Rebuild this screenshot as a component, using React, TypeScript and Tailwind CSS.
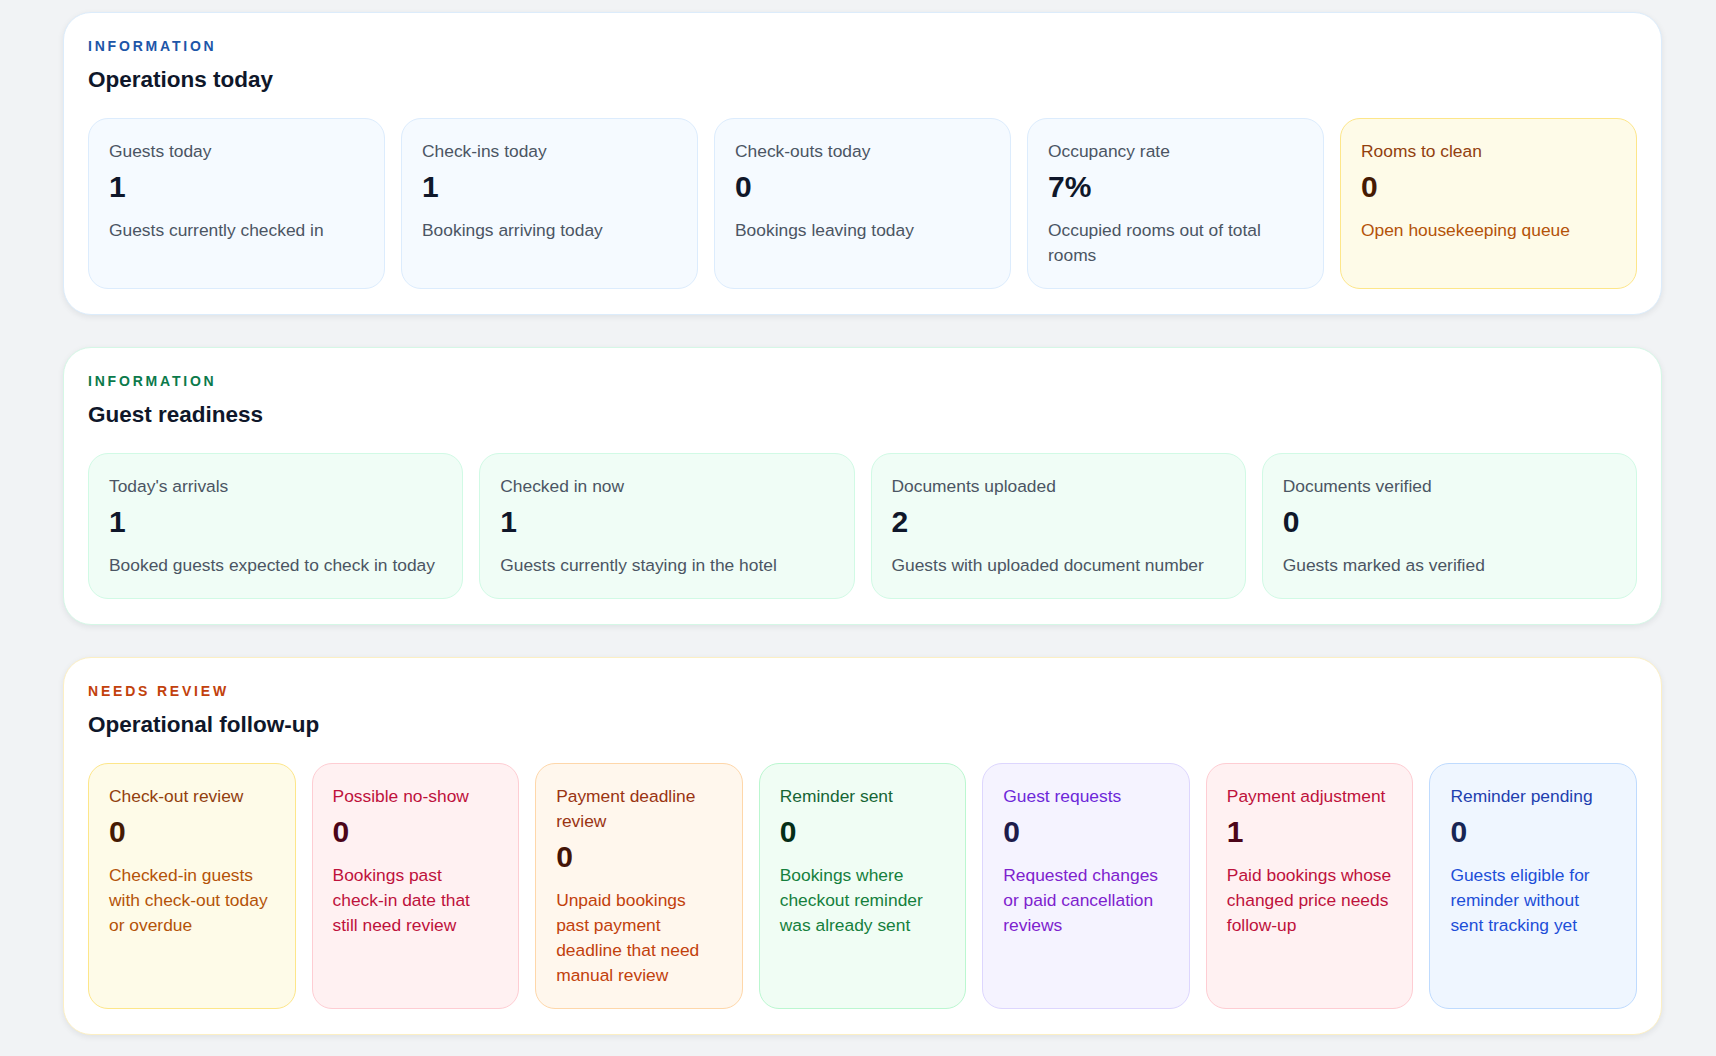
import { Fragment } from "react";

type Tone =
	| "sky"
	| "mint"
	| "amber"
	| "rose"
	| "orange"
	| "green"
	| "violet"
	| "red"
	| "blue";

type Metric = {
	label: string;
	value: string;
	hint: string;
	tone: Tone;
};

type Section = {
	eyebrow: string;
	eyebrowClass: string;
	title: string;
	borderClass: string;
	gridClass: string;
	metrics: Metric[];
};

const toneStyles: Record<
	Tone,
	{ card: string; label: string; value: string; hint: string }
> = {
	sky: {
		card: "bg-[#f5faff] border-[#dcecfd]",
		label: "text-[#4b5563]",
		value: "text-[#0f172a]",
		hint: "text-[#4b5563]",
	},
	mint: {
		card: "bg-[#f0fdf6] border-[#d1fae5]",
		label: "text-[#4b5563]",
		value: "text-[#0f172a]",
		hint: "text-[#4b5563]",
	},
	amber: {
		card: "bg-[#fefbe8] border-[#fde68a]",
		label: "text-[#92400e]",
		value: "text-[#451a03]",
		hint: "text-[#b45309]",
	},
	rose: {
		card: "bg-[#fff1f2] border-[#fecdd3]",
		label: "text-[#be123c]",
		value: "text-[#4c0519]",
		hint: "text-[#be123c]",
	},
	orange: {
		card: "bg-[#fff7ed] border-[#fed7aa]",
		label: "text-[#9a3412]",
		value: "text-[#431407]",
		hint: "text-[#c2410c]",
	},
	green: {
		card: "bg-[#f0fdf4] border-[#bbf7d0]",
		label: "text-[#166534]",
		value: "text-[#052e16]",
		hint: "text-[#15803d]",
	},
	violet: {
		card: "bg-[#f5f3ff] border-[#ddd6fe]",
		label: "text-[#6d28d9]",
		value: "text-[#1e1b4b]",
		hint: "text-[#7e22ce]",
	},
	red: {
		card: "bg-[#fff1f2] border-[#fecdd3]",
		label: "text-[#be123c]",
		value: "text-[#4c0519]",
		hint: "text-[#be123c]",
	},
	blue: {
		card: "bg-[#eff6ff] border-[#bfdbfe]",
		label: "text-[#1e40af]",
		value: "text-[#172554]",
		hint: "text-[#1d4ed8]",
	},
};

const sections: Section[] = [
	{
		eyebrow: "Information",
		eyebrowClass: "text-[#1d56a8]",
		title: "Operations today",
		borderClass: "border-[#dcecfb]",
		gridClass: "grid-cols-5",
		metrics: [
			{ label: "Guests today", value: "1", hint: "Guests currently checked in", tone: "sky" },
			{ label: "Check-ins today", value: "1", hint: "Bookings arriving today", tone: "sky" },
			{ label: "Check-outs today", value: "0", hint: "Bookings leaving today", tone: "sky" },
			{
				label: "Occupancy rate",
				value: "7%",
				hint: "Occupied rooms out of total rooms",
				tone: "sky",
			},
			{ label: "Rooms to clean", value: "0", hint: "Open housekeeping queue", tone: "amber" },
		],
	},
	{
		eyebrow: "Information",
		eyebrowClass: "text-[#0b7a4b]",
		title: "Guest readiness",
		borderClass: "border-[#d5f7e6]",
		gridClass: "grid-cols-4",
		metrics: [
			{
				label: "Today's arrivals",
				value: "1",
				hint: "Booked guests expected to check in today",
				tone: "mint",
			},
			{
				label: "Checked in now",
				value: "1",
				hint: "Guests currently staying in the hotel",
				tone: "mint",
			},
			{
				label: "Documents uploaded",
				value: "2",
				hint: "Guests with uploaded document number",
				tone: "mint",
			},
			{
				label: "Documents verified",
				value: "0",
				hint: "Guests marked as verified",
				tone: "mint",
			},
		],
	},
	{
		eyebrow: "Needs review",
		eyebrowClass: "text-[#c2410c]",
		title: "Operational follow-up",
		borderClass: "border-[#fcefc4]",
		gridClass: "grid-cols-7",
		metrics: [
			{
				label: "Check-out review",
				value: "0",
				hint: "Checked-in guests with check-out today or overdue",
				tone: "amber",
			},
			{
				label: "Possible no-show",
				value: "0",
				hint: "Bookings past check-in date that still need review",
				tone: "rose",
			},
			{
				label: "Payment deadline review",
				value: "0",
				hint: "Unpaid bookings past payment deadline that need manual review",
				tone: "orange",
			},
			{
				label: "Reminder sent",
				value: "0",
				hint: "Bookings where checkout reminder was already sent",
				tone: "green",
			},
			{
				label: "Guest requests",
				value: "0",
				hint: "Requested changes or paid cancellation reviews",
				tone: "violet",
			},
			{
				label: "Payment adjustment",
				value: "1",
				hint: "Paid bookings whose changed price needs follow-up",
				tone: "red",
			},
			{
				label: "Reminder pending",
				value: "0",
				hint: "Guests eligible for reminder without sent tracking yet",
				tone: "blue",
			},
		],
	},
];

// hyphenated words stay on one line (no break after "check-")
const renderText = (text: string) =>
	text.split(" ").map((word, index) => (
		<Fragment key={index}>
			{index > 0 && " "}
			{word.includes("-") ? (
				<span className="whitespace-nowrap">{word}</span>
			) : (
				word
			)}
		</Fragment>
	));

function MetricCard({ metric }: { metric: Metric }) {
	const tone = toneStyles[metric.tone];

	return (
		<div className={`rounded-[20px] border p-5 ${tone.card}`}>
			<p className={`text-[17.4px] leading-[25px] ${tone.label}`}>
				{renderText(metric.label)}
			</p>
			<p
				className={`mt-[5px] text-[30px] font-bold leading-[36px] ${tone.value}`}
			>
				{metric.value}
			</p>
			<p className={`mt-[13px] text-[17.4px] leading-[25px] ${tone.hint}`}>
				{renderText(metric.hint)}
			</p>
		</div>
	);
}

export default function App() {
	return (
		<div className="min-h-screen bg-[#f1f3f5] pb-6 pl-[63px] pr-[54px] pt-3 font-['Liberation_Sans',Arial,sans-serif]">
			<div className="flex flex-col gap-8">
				{sections.map((section) => (
					<section
						key={section.title}
						className={`rounded-[28px] border bg-white px-6 pb-[25px] pt-6 shadow-[0_2px_6px_rgba(15,23,42,0.08)] ${section.borderClass}`}
					>
						<p
							className={`text-[14px] font-bold uppercase leading-[18px] tracking-[0.2em] ${section.eyebrowClass}`}
						>
							{section.eyebrow}
						</p>
						<h2 className="mt-[11px] text-[22.5px] font-bold leading-[28px] text-[#0f172a]">
							{section.title}
						</h2>
						<div className={`mt-6 grid gap-4 ${section.gridClass}`}>
							{section.metrics.map((metric) => (
								<MetricCard key={metric.label} metric={metric} />
							))}
						</div>
					</section>
				))}
			</div>
		</div>
	);
}
